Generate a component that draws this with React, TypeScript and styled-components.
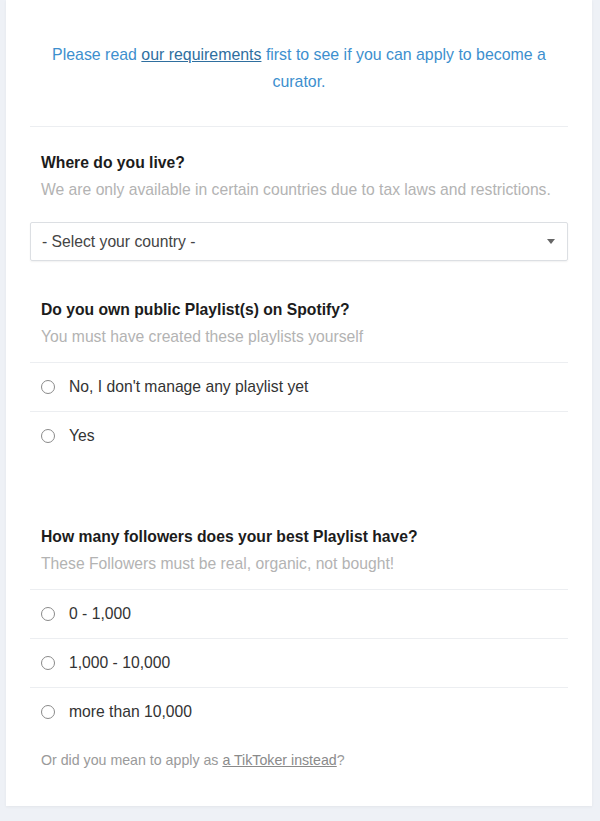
import React from "react";
import styled, { createGlobalStyle } from "styled-components";

const Global = createGlobalStyle`
  html, body { margin: 0; padding: 0; background: #eef1f6; }
  body { font-family: "Liberation Sans", Arial, sans-serif; }
  * { box-sizing: border-box; }
`;

const Page = styled.div`
  width: 600px;
  height: 821px;
  background: #eef1f6;
  padding: 0 8px 15px 6px;
`;

const Card = styled.div`
  background: #ffffff;
  height: 806px;
  padding: 0 24px;
  box-shadow: 0 1px 3px rgba(0, 0, 0, 0.05);
`;

const Intro = styled.p`
  margin: 0;
  padding: 41px 16px 31px;
  text-align: center;
  font-size: 15.9px;
  line-height: 27px;
  color: #3d8fce;
  border-bottom: 1px solid #eceef1;
`;

const Link = styled.a`
  color: #2f6f9f;
  text-decoration: underline;
`;

const Section = styled.section<{ $top: number }>`
  padding-top: ${(p) => p.$top}px;
`;

const Heading = styled.h3`
  margin: 0;
  padding: 0 11px;
  font-size: 15.7px;
  line-height: 20px;
  font-weight: 700;
  color: #1c1c1c;
`;

const Sub = styled.p`
  margin: 7px 0 0;
  padding: 0 11px;
  font-size: 15.7px;
  line-height: 20px;
  color: #b3b3b3;
`;

const Select = styled.div`
  margin-top: 22px;
  height: 39px;
  border: 1px solid #dcdfe3;
  border-radius: 2px;
  display: flex;
  align-items: center;
  justify-content: space-between;
  padding: 0 12px 0 11px;
  font-size: 15.7px;
  color: #444;
  box-shadow: 0 1px 2px rgba(0, 0, 0, 0.06);
`;

const Caret = styled.span`
  width: 0;
  height: 0;
  border-left: 4.5px solid transparent;
  border-right: 4.5px solid transparent;
  border-top: 5px solid #666;
`;

const Options = styled.div`
  margin-top: 15px;
`;

const Option = styled.label`
  display: flex;
  align-items: center;
  height: 49px;
  border-top: 1px solid #eceef1;
  padding: 0 11px;
  font-size: 15.7px;
  color: #333;
`;

const Radio = styled.span`
  width: 14px;
  height: 14px;
  border: 1.5px solid #8a8a8a;
  border-radius: 50%;
  margin-right: 14px;
  flex-shrink: 0;
`;

const Footer = styled.p`
  margin: 14px 0 0;
  padding: 0 11px;
  font-size: 14.2px;
  line-height: 20px;
  color: #9a9a9a;
`;

const FooterLink = styled.a`
  color: #8a8a8a;
  text-decoration: underline;
`;

export default function App() {
  return (
    <Page>
      <Global />
      <Card>
        <Intro>
          Please read <Link>our requirements</Link> first to see if you can apply to become a curator.
        </Intro>
        <Section $top={26}>
          <Heading>Where do you live?</Heading>
          <Sub>We are only available in certain countries due to tax laws and restrictions.</Sub>
          <Select>
            <span>- Select your country -</span>
            <Caret />
          </Select>
        </Section>
        <Section $top={39}>
          <Heading>Do you own public Playlist(s) on Spotify?</Heading>
          <Sub>You must have created these playlists yourself</Sub>
          <Options>
            <Option><Radio />No, I don't manage any playlist yet</Option>
            <Option><Radio />Yes</Option>
          </Options>
        </Section>
        <Section $top={67}>
          <Heading>How many followers does your best Playlist have?</Heading>
          <Sub>These Followers must be real, organic, not bought!</Sub>
          <Options>
            <Option><Radio />0 - 1,000</Option>
            <Option><Radio />1,000 - 10,000</Option>
            <Option><Radio />more than 10,000</Option>
          </Options>
          <Footer>
            Or did you mean to apply as <FooterLink>a TikToker instead</FooterLink>?
          </Footer>
        </Section>
      </Card>
    </Page>
  );
}
